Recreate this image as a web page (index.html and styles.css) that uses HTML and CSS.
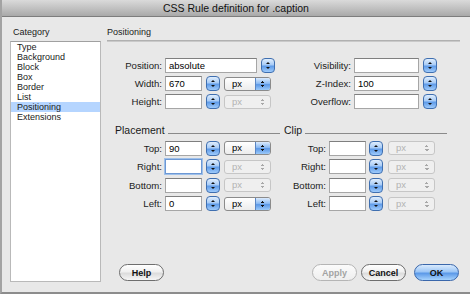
FILE: index.html
```html
<!DOCTYPE html>
<html lang="en">
<head>
  <meta charset="UTF-8">
  <title>CSS Rule definition for .caption</title>
  <link rel="stylesheet" href="styles.css">
</head>
<body>

  <div class="window">
    <div class="titlebar">CSS Rule definition for .caption</div>

    <div class="main">
      <!-- Category list -->
      <div class="sidebar">
        <div class="caption">Category</div>
        <ul class="category-list">
          <li>Type</li>
          <li>Background</li>
          <li>Block</li>
          <li>Box</li>
          <li>Border</li>
          <li>List</li>
          <li class="selected">Positioning</li>
          <li>Extensions</li>
        </ul>
      </div>

      <!-- Positioning panel -->
      <div class="panel">
        <div class="caption">Positioning</div>
        <div class="separator"></div>

        <div class="section top-section">
          <div class="group group-left">
            <div class="row">
              <label>Position:</label>
              <span class="field field-wide">absolute</span>
              <span class="stepper"></span>
            </div>
            <div class="row">
              <label>Width:</label>
              <span class="field">670</span>
              <span class="stepper"></span>
              <span class="select">px</span>
            </div>
            <div class="row">
              <label>Height:</label>
              <span class="field"></span>
              <span class="stepper"></span>
              <span class="select disabled">px</span>
            </div>
          </div>

          <div class="group group-right">
            <div class="row">
              <label>Visibility:</label>
              <span class="field field-mid"></span>
              <span class="stepper"></span>
            </div>
            <div class="row">
              <label>Z-Index:</label>
              <span class="field field-mid">100</span>
              <span class="stepper"></span>
            </div>
            <div class="row">
              <label>Overflow:</label>
              <span class="field field-mid"></span>
              <span class="stepper"></span>
            </div>
          </div>
        </div>

        <div class="section bottom-section">
          <div class="group group-left">
            <div class="group-heading placement">Placement</div>
            <div class="row">
              <label>Top:</label>
              <span class="field">90</span>
              <span class="stepper"></span>
              <span class="select">px</span>
            </div>
            <div class="row">
              <label>Right:</label>
              <span class="field focused"></span>
              <span class="stepper"></span>
              <span class="select disabled">px</span>
            </div>
            <div class="row">
              <label>Bottom:</label>
              <span class="field"></span>
              <span class="stepper"></span>
              <span class="select disabled">px</span>
            </div>
            <div class="row">
              <label>Left:</label>
              <span class="field">0</span>
              <span class="stepper"></span>
              <span class="select">px</span>
            </div>
          </div>

          <div class="group group-clip">
            <div class="group-heading clip">Clip</div>
            <div class="row">
              <label>Top:</label>
              <span class="field"></span>
              <span class="stepper"></span>
              <span class="select disabled">px</span>
            </div>
            <div class="row">
              <label>Right:</label>
              <span class="field"></span>
              <span class="stepper"></span>
              <span class="select disabled">px</span>
            </div>
            <div class="row">
              <label>Bottom:</label>
              <span class="field"></span>
              <span class="stepper"></span>
              <span class="select disabled">px</span>
            </div>
            <div class="row">
              <label>Left:</label>
              <span class="field"></span>
              <span class="stepper"></span>
              <span class="select disabled">px</span>
            </div>
          </div>
        </div>

        <div class="buttons">
          <button class="btn help">Help</button>
          <div class="btn-group">
            <button class="btn" disabled>Apply</button>
            <button class="btn">Cancel</button>
            <button class="btn btn-default">OK</button>
          </div>
        </div>
      </div>
    </div>
  </div>

</body>
</html>
```

FILE: styles.css
```css
/* General Reset */
* {
  margin: 0;
  padding: 0;
  box-sizing: border-box;
}

body {
  font-family: 'Liberation Sans', Arial, sans-serif;
  background-color: #e8e8e8;
  color: #1a1a1a;
  width: 470px;
  height: 294px;
  overflow: hidden;
}

/* Window frame */
.window {
  display: flex;
  flex-direction: column;
  height: 294px;
  border-left: 2px solid #a3a3a3;
  border-bottom: 2px solid #8c8c8c;
  background-color: #e8e8e8;
}

.titlebar {
  height: 17px;
  line-height: 16px;
  text-align: center;
  font-size: 10.5px;
  color: #111;
  background: linear-gradient(#dadada, #bdbdbd 60%, #a9a9a9);
  border-bottom: 1px solid #7d7d7d;
}

.main {
  display: flex;
  flex: 1;
}

.caption {
  font-size: 9px;
  line-height: 12px;
  height: 12px;
}

/* Category list */
.sidebar {
  padding: 9px 0 0 8px;
}

.sidebar .caption {
  padding-left: 3px;
}

.category-list {
  list-style-type: none;
  margin-top: 3px;
  width: 91px;
  height: 241px;
  background-color: #fff;
  border: 1px solid #b9b9b9;
  border-top-color: #a0a0a0;
}

.category-list li {
  font-size: 9px;
  line-height: 10px;
  height: 10px;
  padding-left: 6px;
}

.category-list li.selected {
  background-color: #b5d5ff;
}

/* Right panel */
.panel {
  flex: 1;
  display: flex;
  flex-direction: column;
  margin-left: 6px;
  padding: 9px 10px 11px 0;
}

.separator {
  height: 2px;
  margin-top: 2px;
  background-color: #b0b0b0;
  border-bottom: 1px solid #c9c9c9;
}

.section {
  display: flex;
}

.top-section {
  margin-top: 16px;
}

.bottom-section {
  margin-top: 15px;
}

.group {
  display: flex;
  flex-direction: column;
  gap: 3px;
}

.group-left {
  width: 175px;
}

.bottom-section .group-left {
  gap: 3.5px;
}

.group-clip {
  width: 165px;
  gap: 3.5px;
}

.group-heading {
  display: flex;
  align-items: baseline;
  font-size: 10.5px;
  line-height: 12px;
  margin-bottom: 1px;
}

.group-heading::after {
  content: "";
  flex: 1;
  height: 1px;
  margin-left: 3px;
  background-color: #8a8a8a;
}

.placement {
  padding-left: 8px;
  margin-right: 2px;
}

.clip {
  padding-left: 2px;
}

/* Form rows */
.row {
  display: flex;
  align-items: center;
  height: 15px;
}

.row label {
  width: 55px;
  margin-right: 3px;
  text-align: right;
  font-size: 9.6px;
  color: #222;
}

.group-right .row label {
  width: 69px;
}

.group-clip .row label {
  width: 44px;
}

.field {
  width: 37px;
  height: 15px;
  padding-left: 3px;
  font-size: 9.5px;
  line-height: 13px;
  background-color: #fff;
  border: 1px solid #a6a6a6;
  border-top-color: #7f7f7f;
  color: #000;
}

.field-wide {
  width: 92px;
}

.field-mid {
  width: 65px;
}

.field.focused {
  border-color: #6d98d4;
  box-shadow: 0 0 0 1px #9ec0ea;
}

/* Aqua stepper */
.stepper {
  position: relative;
  width: 14px;
  height: 15px;
  margin-left: 4px;
  border: 1px solid #3f6fb0;
  border-radius: 4px;
  background: linear-gradient(#e0eefd, #a7cbf6 45%, #5f9be8 55%, #9fcbfb);
}

.stepper::before,
.stepper::after {
  content: "";
  position: absolute;
  left: 4px;
  border-left: 2px solid transparent;
  border-right: 2px solid transparent;
}

.stepper::before {
  top: 3px;
  border-bottom: 2px solid #111;
}

.stepper::after {
  bottom: 3px;
  border-top: 2px solid #111;
}

.group-clip .stepper {
  margin-left: 3px;
}

/* Popup menus */
.select {
  position: relative;
  width: 47px;
  height: 14px;
  margin-left: 4px;
  padding-left: 7px;
  font-size: 9.5px;
  line-height: 12px;
  border: 1px solid #8b8b8b;
  border-radius: 3px;
  background: linear-gradient(#ffffff, #ececec);
  color: #000;
  overflow: hidden;
}

.select::after {
  content: "";
  position: absolute;
  top: 0;
  right: 0;
  width: 14px;
  height: 12px;
  background: linear-gradient(#dcebfd, #8dbcf4 45%, #5c98e6 55%, #9ccafa);
  border-left: 1px solid #5a86c4;
}

.select::before {
  content: "";
  position: absolute;
  top: 3px;
  right: 5px;
  width: 4px;
  height: 6px;
  z-index: 1;
  background:
    linear-gradient(to bottom right, transparent 50%, #111 50%) 0 0 / 2px 2px no-repeat,
    linear-gradient(to bottom left, transparent 50%, #111 50%) 2px 0 / 2px 2px no-repeat,
    linear-gradient(to top right, transparent 50%, #111 50%) 0 4px / 2px 2px no-repeat,
    linear-gradient(to top left, transparent 50%, #111 50%) 2px 4px / 2px 2px no-repeat;
}

.select.disabled {
  border-color: #c6c6c6;
  background: #efefef;
  color: #b3b3b3;
}

.select.disabled::after {
  display: none;
}

.select.disabled::before {
  background:
    linear-gradient(to bottom right, transparent 50%, #a8a8a8 50%) 0 0 / 2px 2px no-repeat,
    linear-gradient(to bottom left, transparent 50%, #a8a8a8 50%) 2px 0 / 2px 2px no-repeat,
    linear-gradient(to top right, transparent 50%, #a8a8a8 50%) 0 4px / 2px 2px no-repeat,
    linear-gradient(to top left, transparent 50%, #a8a8a8 50%) 2px 4px / 2px 2px no-repeat;
}

.group-clip .select {
  margin-left: 5px;
}

/* Buttons */
.buttons {
  display: flex;
  justify-content: space-between;
  margin-top: auto;
  padding-left: 12px;
  padding-right: 1px;
}

.btn-group {
  display: flex;
  gap: 4px;
}

.btn {
  width: 45px;
  height: 17px;
  border-radius: 9px;
  border: 1px solid #6e6e6e;
  background: linear-gradient(#ffffff, #f0f0f0 45%, #dcdcdc 55%, #f6f6f6);
  font-family: 'Liberation Sans', Arial, sans-serif;
  font-size: 9px;
  font-weight: bold;
  color: #111;
}

.btn:disabled {
  border-color: #b5b5b5;
  color: #a3a3a3;
  background: linear-gradient(#fbfbfb, #eeeeee);
}

.btn-default {
  margin-left: 4px;
  border-color: #3a67ab;
  background: linear-gradient(#d9eafd, #9cc6f6 45%, #5b99e8 55%, #a7d3fd);
}
```
